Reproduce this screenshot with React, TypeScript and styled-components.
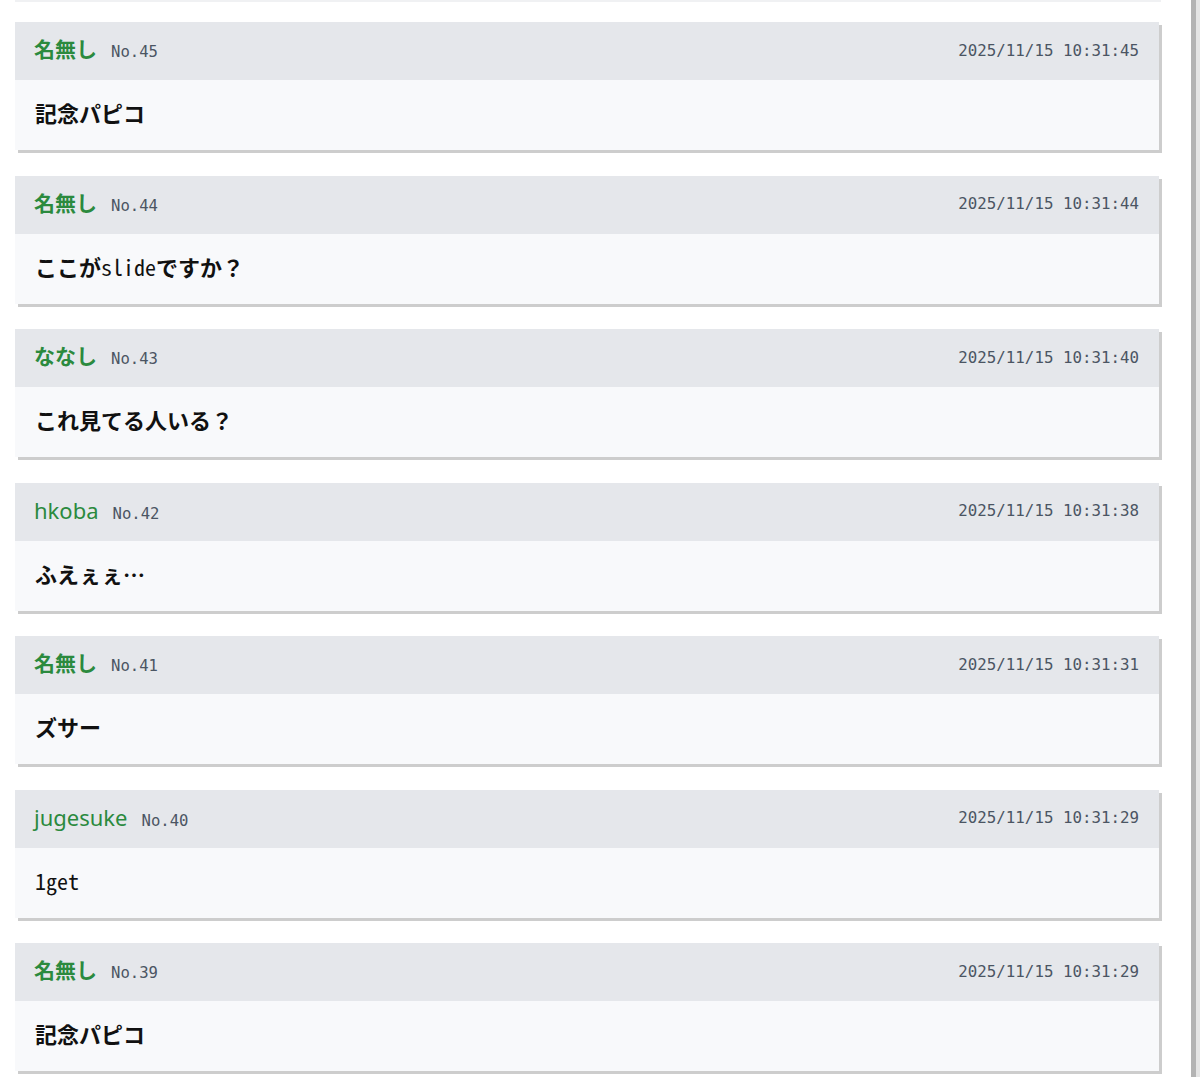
import React from "react";
import styled, { createGlobalStyle } from "styled-components";

const Global = createGlobalStyle`
  html, body { margin: 0; padding: 0; background: #ffffff; }
  body { font-family: "Noto Sans", "Noto Sans CJK JP", sans-serif; }
`;

const Page = styled.div`
  width: 1200px;
  height: 1077px;
  overflow: hidden;
  display: flex;
  background: #ffffff;
`;

const Column = styled.div`
  width: 1191px;
  padding-left: 15px;
  box-sizing: border-box;
  display: flex;
  flex-direction: column;
`;

const RightRail = styled.div`
  width: 9px;
  flex: none;
  border-left: 5px solid #b3b3b3;
  background: #e4e4e4;
  box-sizing: border-box;
`;

const PrevEdge = styled.div`
  width: 1146px;
  height: 2px;
  background: #f0f1f3;
  margin-bottom: 20px;
`;

const List = styled.div`
  display: flex;
  flex-direction: column;
  gap: 25.5px;
`;

const Card = styled.article`
  width: 1144px;
  flex: none;
  box-shadow: 3px 3px 0 #cdcdcd;
`;

const Header = styled.header`
  height: 58px;
  background: #e5e7eb;
  display: flex;
  align-items: center;
  justify-content: space-between;
  padding: 0 20px 2px 19px;
  box-sizing: border-box;
`;

const Who = styled.div`
  display: flex;
  align-items: baseline;
  gap: 14px;
`;

const Name = styled.span<{ $cjk: boolean }>`
  font-family: "Noto Sans", "Noto Sans CJK JP", sans-serif;
  font-size: ${(p) => (p.$cjk ? "21px" : "22px")};
  font-weight: ${(p) => (p.$cjk ? 700 : 400)};
  color: #2b8a3e;
  line-height: 1;
`;

const No = styled.span`
  font-family: "DejaVu Sans Mono", monospace;
  font-size: 15.6px;
  color: #4b5563;
`;

const Stamp = styled.span`
  font-family: "DejaVu Sans Mono", monospace;
  font-size: 15.8px;
  color: #4b5563;
`;

const Body = styled.div`
  height: 70px;
  background: #f8f9fb;
  display: flex;
  align-items: center;
  padding: 0 20px 6px 20px;
  box-sizing: border-box;
  font-family: "Noto Sans Mono CJK JP", "DejaVu Sans Mono", "Noto Sans CJK JP", monospace;
  font-size: 22px;
  font-weight: 700;
  color: #111111;
  white-space: pre;
`;

const Latin = styled.span`
  font-weight: 400;
`;

const latinRe = /([\x20-\x7e]+)/;

function Message({ text }: { text: string }) {
  const parts = text.split(latinRe).filter((s) => s.length > 0);
  return (
    <Body>
      {parts.map((s, i) =>
        latinRe.test(s) ? <Latin key={i}>{s}</Latin> : <React.Fragment key={i}>{s}</React.Fragment>
      )}
    </Body>
  );
}

type Post = { name: string; no: number; time: string; text: string };

const posts: Post[] = [
  { name: "名無し", no: 45, time: "2025/11/15 10:31:45", text: "記念パピコ" },
  { name: "名無し", no: 44, time: "2025/11/15 10:31:44", text: "ここがslideですか？" },
  { name: "ななし", no: 43, time: "2025/11/15 10:31:40", text: "これ見てる人いる？" },
  { name: "hkoba", no: 42, time: "2025/11/15 10:31:38", text: "ふえぇぇ…" },
  { name: "名無し", no: 41, time: "2025/11/15 10:31:31", text: "ズサー" },
  { name: "jugesuke", no: 40, time: "2025/11/15 10:31:29", text: "1get" },
  { name: "名無し", no: 39, time: "2025/11/15 10:31:29", text: "記念パピコ" },
];

export default function App() {
  return (
    <Page>
      <Global />
      <Column>
        <PrevEdge />
        <List>
          {posts.map((p) => (
            <Card key={p.no}>
              <Header>
                <Who>
                  <Name $cjk={!/^[\x20-\x7e]+$/.test(p.name)}>{p.name}</Name>
                  <No>No.{p.no}</No>
                </Who>
                <Stamp>{p.time}</Stamp>
              </Header>
              <Message text={p.text} />
            </Card>
          ))}
        </List>
      </Column>
      <RightRail />
    </Page>
  );
}
